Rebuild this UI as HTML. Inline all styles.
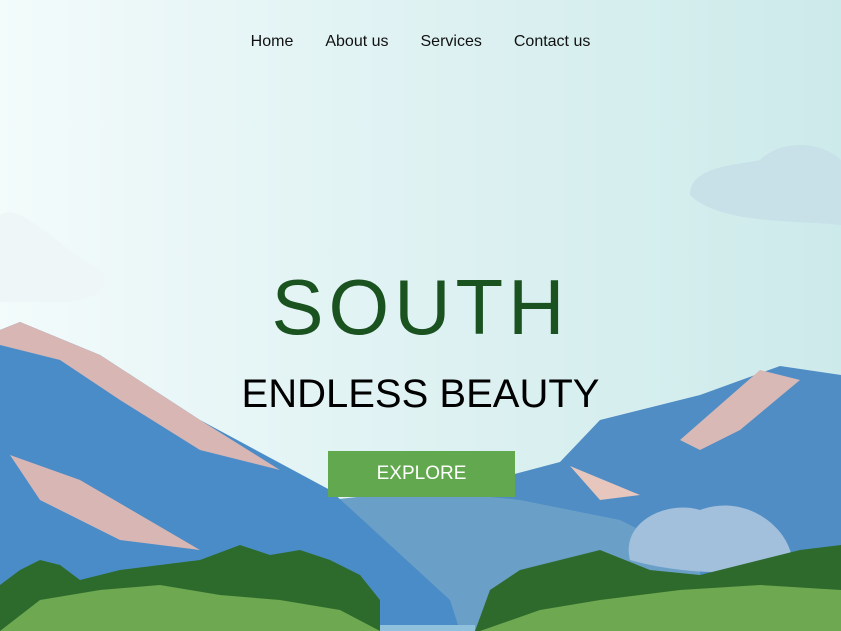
<!DOCTYPE html>
<html><head><style>
body{margin:0;width:841px;height:631px;overflow:hidden;font-family:"Liberation Sans",sans-serif;position:relative;background:linear-gradient(90deg,#f3fbfb 0%,#e4f4f5 35%,#cdeaea 100%)}
nav{position:absolute;top:33px;left:0;width:841px;text-align:center;font-size:16px;color:#111}
nav span{margin:0 16px}
svg{position:absolute;left:0;top:0}
h1{position:absolute;top:262px;width:841px;text-align:center;margin:0;font-weight:normal;font-size:78px;letter-spacing:5px;color:#1a5220}
h2{position:absolute;top:372px;width:841px;text-align:center;margin:0;font-weight:normal;font-size:40px;color:#000}
.btn{position:absolute;left:328px;top:451px;width:187px;height:46px;background:#62a84e;color:#fff;font-size:19px;text-align:center;line-height:46px}
</style></head><body>
<svg width="841" height="631">
<path d="M690,195 C690,165 740,165 760,160 C780,140 820,140 841,160 L841,225 C800,220 720,225 690,195Z" fill="#c8e1e9"/>
<path d="M0,215 C20,200 60,250 100,270 C115,290 90,305 40,302 L0,302Z" fill="#eef6f8"/>
<polygon points="340,520 560,462 600,420 700,395 780,366 841,375 841,631 340,631" fill="#4f8dc4"/>
<polygon points="330,500 420,490 520,500 620,520 700,560 700,631 330,631" fill="#6aa0c8"/>
<polygon points="570,466 640,495 600,500" fill="#e6c6bd"/>
<polygon points="680,440 760,370 800,380 740,430 700,450" fill="#d9b9b6"/>
<polygon points="0,330 20,322 100,355 200,420 330,490 450,600 460,631 0,631" fill="#4a8cc7"/>
<polygon points="20,322 100,355 200,420 280,470 200,450 120,400 60,360 0,345 0,330" fill="#d8b6b4"/>
<polygon points="10,455 80,480 200,550 120,540 40,500" fill="#d8b6b4"/>
<path d="M630,560 C620,520 670,500 700,510 C740,495 780,520 790,550 C800,575 700,580 630,560Z" fill="#a2bfdc"/>
<polygon points="0,631 0,585 20,570 40,560 60,565 80,580 120,570 160,565 200,560 240,545 270,555 300,550 330,560 360,575 380,600 380,631" fill="#2d6b2c"/>
<polygon points="0,631 40,600 100,590 160,585 220,595 280,600 340,610 380,631" fill="#6ea851"/>
<polygon points="475,631 490,590 520,570 560,560 600,550 650,570 700,575 760,560 800,550 841,545 841,631" fill="#2e6a2c"/>
<polygon points="480,631 540,610 600,600 680,590 760,585 841,590 841,631" fill="#6ea851"/>
<rect x="380" y="625" width="95" height="6" fill="#8fc0dc"/>
</svg>
<nav><span>Home</span><span>About us</span><span>Services</span><span>Contact us</span></nav>
<h1>SOUTH</h1>
<h2>ENDLESS BEAUTY</h2>
<div class="btn">EXPLORE</div>
</body></html>
